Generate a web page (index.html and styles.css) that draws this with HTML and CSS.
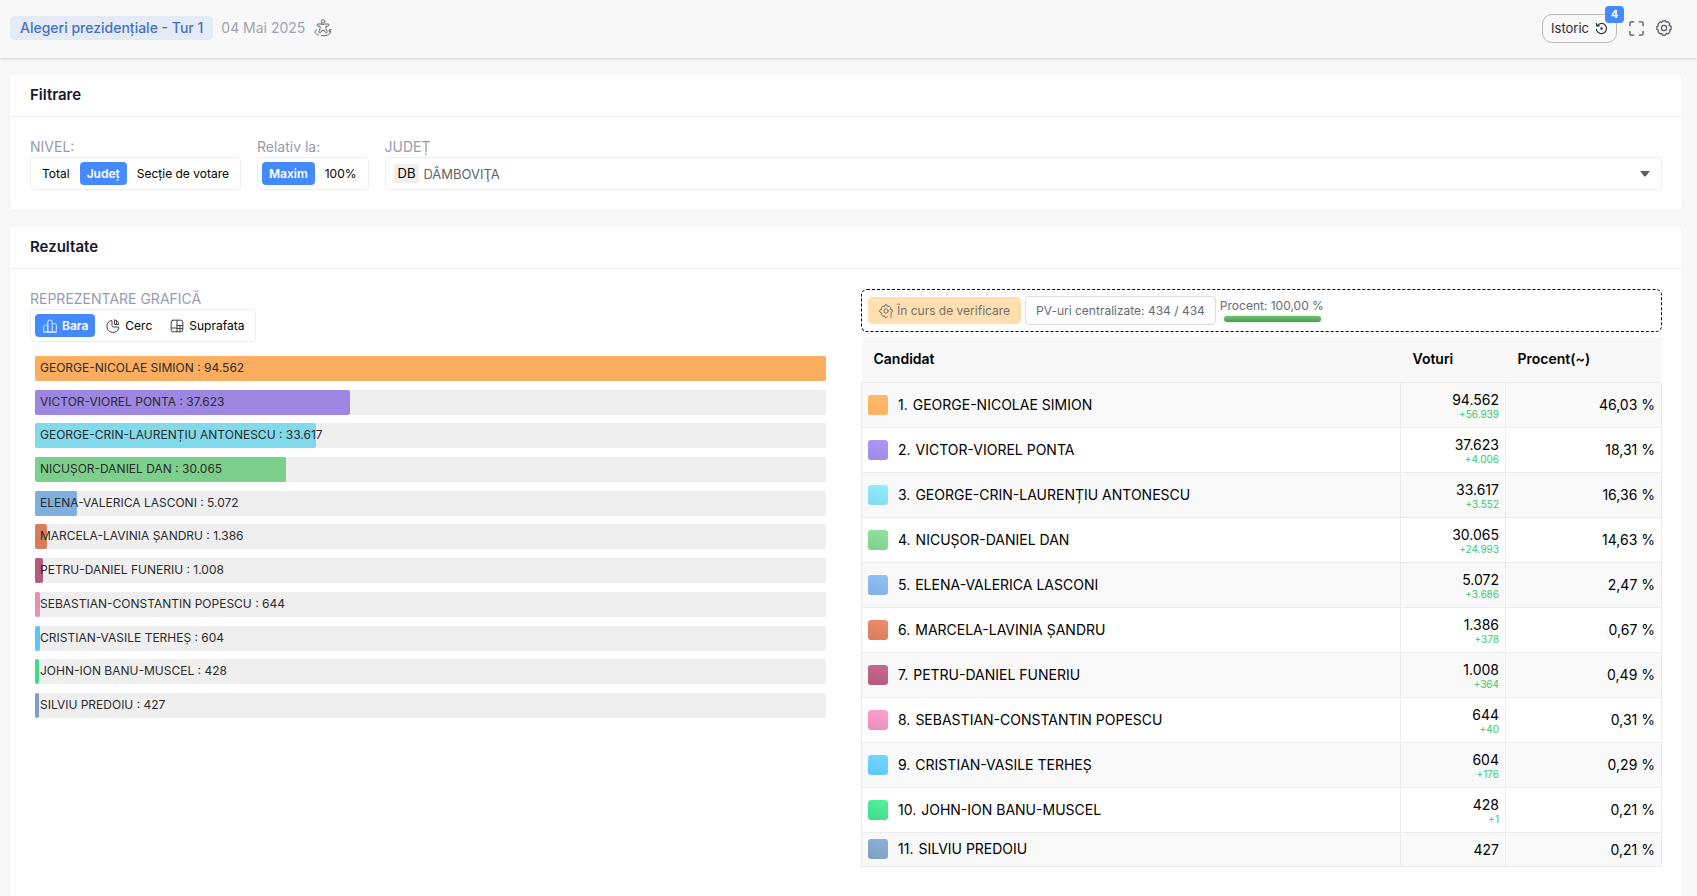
FILE: index.html
```html
<!DOCTYPE html>
<html lang="ro">
<head>
<meta charset="utf-8">
<meta name="viewport" content="width=device-width, initial-scale=1">
<title>Alegeri prezidențiale - Tur 1</title>
<link rel="stylesheet" href="styles.css">
</head>
<body>
<header class="topbar">
  <h1 class="election">Alegeri prezidențiale - Tur 1</h1>
  <time class="date" datetime="2025-05-04">04 Mai 2025</time>
  <svg class="icon person" viewBox="0 0 18 18" aria-hidden="true"><circle cx="9" cy="2.400" r="1.700"/><path d="M7.500 5H4.200Q3 5 3 6t1.200 1.200h1.900v2.300l-1.200 3q-.3 1 .5 1.400t1.300-.5l1-1.900h2.600l1 1.900q.5.900 1.300.5t.5-1.400l-1.200-3V7.200h1.900Q15 7.200 15 6t-1.200-1h-3.300Q9 6.300 7.500 5z"/><path d="M2.700 10.800C-.3 12.600.8 15 4.500 16M7.500 16.700c2 .2 4 0 6-.6 3.600-1.300 4.200-3.500 1.800-5.300M15.300 13.200v-2.400h2"/></svg>
  <div class="actions">
    <button class="history" type="button">Istoric
      <svg class="icon clock" viewBox="0 0 14 14" aria-hidden="true"><path d="M2.200 4.200A5.500 5.500 0 1 1 1.500 8M1.300 1.600l.7 2.900 3-.4"/><circle cx="7" cy="7" r=".7"/></svg>
      <span class="badge">4</span>
    </button>
    <button class="plain" type="button" aria-label="Ecran complet"><svg class="icon full" viewBox="0 0 16 16" aria-hidden="true"><path d="M1 5V2.500Q1 1 2.500 1H5M11 1h2.500Q15 1 15 2.500V5M15 11v2.500q0 1.500-1.500 1.500H11M5 15H2.500Q1 15 1 13.500V11"/></svg></button>
    <button class="plain" type="button" aria-label="Setări"><svg class="icon gear" viewBox="0 0 16 16" aria-hidden="true"><path d="M6.500.8h3l.6 1.500 1.500-.6 2.200 2.200-.7 1.500 2 1v3l-1.600.7.6 1.600-2.100 2.100-1.600-.6-.8 2h-3l-.8-1.800-1.600.6-2.100-2.200.6-1.600L.8 9.500v-3l1.700-.8-.6-1.600 2.200-2.200 1.600.6z"/><circle cx="8" cy="8" r="2.600"/></svg></button>
  </div>
</header>

<main class="page">
  <section class="card">
    <h2 class="card-title">Filtrare</h2>
    <div class="card-body filters">
      <div class="field">
        <span class="label" id="l-nivel">NIVEL:</span>
        <div class="segments" role="group" aria-labelledby="l-nivel">
          <button type="button" class="segment">Total</button>
          <button type="button" class="segment active" aria-pressed="true">Județ</button>
          <button type="button" class="segment">Secție de votare</button>
        </div>
      </div>
      <div class="field">
        <span class="label" id="l-relativ">Relativ la:</span>
        <div class="segments" role="group" aria-labelledby="l-relativ">
          <button type="button" class="segment active" aria-pressed="true">Maxim</button>
          <button type="button" class="segment">100%</button>
        </div>
      </div>
      <div class="field grow">
        <label class="label" for="judet">JUDEȚ</label>
        <div class="picker">
          <span class="code">DB</span>
          <select id="judet"><option>DÂMBOVIŢA</option></select>
          <svg class="caret" viewBox="0 0 10 6" aria-hidden="true"><path d="M0 0h10L6 5Q5 6 4 5z"/></svg>
        </div>
      </div>
    </div>
  </section>

  <section class="card last">
    <h2 class="card-title">Rezultate</h2>
    <div class="card-body results">
      <div class="chart">
        <span class="label" id="l-grafic">REPREZENTARE GRAFICĂ</span>
        <div class="segments views" role="group" aria-labelledby="l-grafic">
          <button type="button" class="segment active" aria-pressed="true"><svg class="icon small" viewBox="0 0 14 14" aria-hidden="true"><path d="M.6 8Q.6 6 2.600 6H4.800v7H2.200Q.6 13 .6 11.500zM4.800 13V3Q4.800 1 7 1t2.200 2v10zM9.200 4.500h2.200q2 0 2 2v5q0 1.500-1.600 1.500H9.200M0 13h14"/></svg>Bara</button>
          <button type="button" class="segment"><svg class="icon small" viewBox="0 0 14 14" aria-hidden="true"><path d="M5.500 1.500A6 6 0 1 0 12.800 8.600Q13 8 12.300 8H7.500Q6 8 6 6.500V2Q6 1.300 5.500 1.500zM8.500 1.700v3.800h4.200A5 5 0 0 0 8.500.9zM10.500 1.500v4"/></svg>Cerc</button>
          <button type="button" class="segment"><svg class="icon small" viewBox="0 0 14 14" aria-hidden="true"><path d="M3 1.200h8Q12.800 1.200 12.800 3v8q0 1.800-1.800 1.800H3Q1.200 12.800 1.200 11V3Q1.200 1.200 3 1.200zM7 1.200v11.600M1.200 9h5.800M7 6.500h5.800M7 9.500h5.800M10 6.500v6.300"/></svg>Suprafata</button>
        </div>
        <ul class="bars">
          <li class="bar"><span class="fill c1" style="width:100%"></span><span class="name">GEORGE-NICOLAE SIMION : 94.562</span></li>
          <li class="bar"><span class="fill c2" style="width:39.79%"></span><span class="name">VICTOR-VIOREL PONTA : 37.623</span></li>
          <li class="bar"><span class="fill c3" style="width:35.55%"></span><span class="name">GEORGE-CRIN-LAURENȚIU ANTONESCU : 33.617</span></li>
          <li class="bar"><span class="fill c4" style="width:31.79%"></span><span class="name">NICUȘOR-DANIEL DAN : 30.065</span></li>
          <li class="bar"><span class="fill c5" style="width:5.36%"></span><span class="name">ELENA-VALERICA LASCONI : 5.072</span></li>
          <li class="bar"><span class="fill c6" style="width:1.47%"></span><span class="name">MARCELA-LAVINIA ȘANDRU : 1.386</span></li>
          <li class="bar"><span class="fill c7" style="width:1.07%"></span><span class="name">PETRU-DANIEL FUNERIU : 1.008</span></li>
          <li class="bar"><span class="fill c8" style="width:0.68%"></span><span class="name">SEBASTIAN-CONSTANTIN POPESCU : 644</span></li>
          <li class="bar"><span class="fill c9" style="width:0.64%"></span><span class="name">CRISTIAN-VASILE TERHEȘ : 604</span></li>
          <li class="bar"><span class="fill c10" style="width:0.45%"></span><span class="name">JOHN-ION BANU-MUSCEL : 428</span></li>
          <li class="bar"><span class="fill c11" style="width:0.45%"></span><span class="name">SILVIU PREDOIU : 427</span></li>
        </ul>
      </div>

      <div class="details">
        <div class="status">
          <span class="chip pending"><svg class="icon small" viewBox="0 0 14 14" aria-hidden="true"><path d="M8.500 12.700 8 13.300H6l-.6-1.600-1.500.6-1.700-1.700.6-1.400L.8 8V6l2-.8-.6-1.400 1.700-1.700 1.500.6L6 .8h2l.8 1.900 1.500-.6 1.600 1.700-.6 1.400 2 .8v2l-1 .4M12 9.500v2.600M12 13.300v.7"/><circle cx="7" cy="7" r="2.200"/></svg>În curs de verificare</span>
          <span class="chip">PV-uri centralizate: 434 / 434</span>
          <div class="progress">
            <span id="l-procent">Procent: 100,00 %</span>
            <div class="meter" role="progressbar" aria-valuenow="100" aria-valuemin="0" aria-valuemax="100" aria-labelledby="l-procent"></div>
          </div>
        </div>
        <table class="table">
          <thead><tr><th>Candidat</th><th class="votes">Voturi</th><th class="percent">Procent(~)</th></tr></thead>
          <tbody>
            <tr><td><div class="who"><i class="swatch c1"></i><span>1.</span><span>GEORGE-NICOLAE SIMION</span></div></td><td class="num">94.562<small>+56.939</small></td><td class="num">46,03 %</td></tr>
            <tr><td><div class="who"><i class="swatch c2"></i><span>2.</span><span>VICTOR-VIOREL PONTA</span></div></td><td class="num">37.623<small>+4.006</small></td><td class="num">18,31 %</td></tr>
            <tr><td><div class="who"><i class="swatch c3"></i><span>3.</span><span>GEORGE-CRIN-LAURENȚIU ANTONESCU</span></div></td><td class="num">33.617<small>+3.552</small></td><td class="num">16,36 %</td></tr>
            <tr><td><div class="who"><i class="swatch c4"></i><span>4.</span><span>NICUȘOR-DANIEL DAN</span></div></td><td class="num">30.065<small>+24.993</small></td><td class="num">14,63 %</td></tr>
            <tr><td><div class="who"><i class="swatch c5"></i><span>5.</span><span>ELENA-VALERICA LASCONI</span></div></td><td class="num">5.072<small>+3.686</small></td><td class="num">2,47 %</td></tr>
            <tr><td><div class="who"><i class="swatch c6"></i><span>6.</span><span>MARCELA-LAVINIA ȘANDRU</span></div></td><td class="num">1.386<small>+378</small></td><td class="num">0,67 %</td></tr>
            <tr><td><div class="who"><i class="swatch c7"></i><span>7.</span><span>PETRU-DANIEL FUNERIU</span></div></td><td class="num">1.008<small>+364</small></td><td class="num">0,49 %</td></tr>
            <tr><td><div class="who"><i class="swatch c8"></i><span>8.</span><span>SEBASTIAN-CONSTANTIN POPESCU</span></div></td><td class="num">644<small>+40</small></td><td class="num">0,31 %</td></tr>
            <tr><td><div class="who"><i class="swatch c9"></i><span>9.</span><span>CRISTIAN-VASILE TERHEȘ</span></div></td><td class="num">604<small>+176</small></td><td class="num">0,29 %</td></tr>
            <tr><td><div class="who"><i class="swatch c10"></i><span>10.</span><span>JOHN-ION BANU-MUSCEL</span></div></td><td class="num">428<small>+1</small></td><td class="num">0,21 %</td></tr>
            <tr><td><div class="who"><i class="swatch c11"></i><span>11.</span><span>SILVIU PREDOIU</span></div></td><td class="num">427</td><td class="num">0,21 %</td></tr>
          </tbody>
        </table>
      </div>
    </div>
  </section>
</main>
</body>
</html>
```
FILE: styles.css
```css
* { box-sizing: border-box; }

body {
  margin: 0;
  min-height: 100vh;
  display: flex;
  flex-direction: column;
  background: #f8f8f8;
  color: #000;
  font: 14px/20px Inter, "Noto Sans", sans-serif;
}

button, select { font: inherit; color: inherit; }

.icon { width: 16px; height: 16px; flex: none; fill: none; stroke: currentColor; stroke-width: 1.2; stroke-linecap: round; stroke-linejoin: round; }
.icon.small { width: 14px; height: 14px; stroke-width: 1; }

.topbar {
  display: flex;
  align-items: center;
  height: 58px;
  padding: 0 25px 2px 10px;
  box-shadow: 0 1px 3px rgba(0, 0, 0, .16);
}
.election { margin: 0; padding: 2px 10px; border-radius: 5px; background: #e5ebf6; color: #4672bd; font-size: 14px; font-weight: 500; }
.date { margin-left: 8px; color: #a0a4b0; }
.icon.person { width: 18px; height: 18px; margin-left: 9px; color: #666; stroke-width: 1; }

.actions { display: flex; align-items: center; gap: 12px; margin-left: auto; color: #50555e; }
.history { position: relative; display: flex; align-items: center; gap: 6px; height: 29px; padding: 0 8px; border: 1px solid #bbb; border-radius: 10px; background: none; color: #2a2d33; font-size: 13px; }
.icon.clock { width: 13px; height: 13px; }
.badge { position: absolute; top: -9px; right: -8px; width: 19px; border-radius: 4px; background: #4589ff; color: #fff; font-size: 11px; line-height: 17px; font-weight: 700; text-align: center; }
.plain { display: flex; padding: 0; border: 0; background: none; color: #50555e; }
.icon.full { width: 15px; height: 15px; stroke-width: 1.4; }

.page { flex: 1; display: flex; flex-direction: column; gap: 16px; padding: 16px 15px 0 10px; }
.card { border-radius: 5px; background: #fff; box-shadow: 0 0 2px rgba(0, 0, 0, .08); }
.card.last { flex: 1; border-radius: 5px 5px 0 0; }
.card-title { margin: 0; padding: 11px 20px; border-bottom: 1px solid #efefef; color: #16192c; font-size: 15px; font-weight: 600; }
.card-body { padding: 20px; }

.label { display: block; color: #989cab; }
.filters { display: flex; gap: 16px; }
.grow { flex: 1; }
.segments { display: inline-flex; gap: 3px; padding: 4px; border: 1px solid #efefef; border-radius: 4px; vertical-align: top; }
.segment { display: flex; align-items: center; gap: 5px; height: 23px; padding: 0 7px; border: 0; border-radius: 4px; background: none; font-size: 12px; }
.segment.active { background: #4589ff; color: #fff; font-weight: 600; }
.views .segment { padding: 0 7px 0 8px; }
.views .icon { color: #444; }
.views .active .icon { color: #dce8ff; }

.picker { display: flex; align-items: center; gap: 4px; height: 33px; padding: 0 11px 0 8px; border: 1px solid #efefef; border-radius: 4px; font-size: 13px; }
.code { padding: 0 4px; border-radius: 2px; background: #eee; line-height: 19px; }
.picker select { flex: 1; min-width: 0; padding: 0; border: 0; background: none; appearance: none; color: #5f636b; }
.caret { width: 10px; height: 6px; fill: #5a6068; }

.results { display: grid; grid-template-columns: 1fr 1fr; gap: 30px; }

/* Eleven bars spread evenly over the list */
.bars { display: flex; flex-direction: column; justify-content: space-between; height: 362px; margin: 14px 5px 0; padding: 0; list-style: none; }
.bar { display: grid; height: 25px; background: #efefef; color: #2b2b2b; font-size: 12px; line-height: 23px; }
.bar > * { grid-area: 1 / 1; }
.fill { border-radius: 2px; background: var(--bar); }
.name { padding-left: 5px; white-space: nowrap; }

.status { display: flex; align-items: center; gap: 4px; height: 43px; padding: 0 6px; border: 1px dashed #000; border-radius: 6px; color: #666a73; font-size: 12px; }
.chip { display: flex; align-items: center; gap: 4px; height: 29px; padding: 0 10px; border: 1px solid #ddd; border-radius: 4px; }
.pending { height: 27px; border-color: #ffdfb0; background: #ffdfb0; color: #74706c; }
.progress { display: flex; flex-direction: column; padding-bottom: 3px; line-height: 18px; }
.meter { height: 6px; margin: 1px 3px 0 4px; border-radius: 3px; background: linear-gradient(#6fbf73, #46a04a); box-shadow: 0 0 3px rgba(0, 0, 0, .2); }

.table { width: 100%; margin-top: 5px; border-collapse: collapse; }
.table th { height: 45px; padding: 0 12px; background: #f8f8f8; font-weight: 600; text-align: left; }
.votes { width: 105px; }
.percent { width: 156px; }
.table td { padding: 6px; border: 1px solid #ececec; }
.table tbody tr:nth-child(odd) { background: #f9f9f9; }
.who { display: flex; align-items: center; }
.who span + span { margin-left: 5px; }
.swatch { width: 20px; height: 20px; margin-right: 10px; border-radius: 3px; background: linear-gradient(20deg, var(--bar), var(--tint)); }
.table .num { padding: 8px 6px 7px; line-height: 18px; text-align: right; }
.num small { display: block; padding-bottom: 1px; color: #37c871; font-size: 10px; line-height: 10px; }

.c1 { --bar: #fbae5f; --tint: #fdbc6e; }
.c2 { --bar: #9c88e2; --tint: #b09cf8; }
.c3 { --bar: #80daeb; --tint: #92f0ff; }
.c4 { --bar: #7dd08c; --tint: #92e2a0; }
.c5 { --bar: #7dafe0; --tint: #92c3f4; }
.c6 { --bar: #d87c5c; --tint: #ee8d6c; }
.c7 { --bar: #b35a7e; --tint: #c86a90; }
.c8 { --bar: #e78fb8; --tint: #fda3cf; }
.c9 { --bar: #5ec5fb; --tint: #74d8ff; }
.c10 { --bar: #40dc8a; --tint: #52f29c; }
.c11 { --bar: #7d9fc4; --tint: #8fb3d8; }
```
